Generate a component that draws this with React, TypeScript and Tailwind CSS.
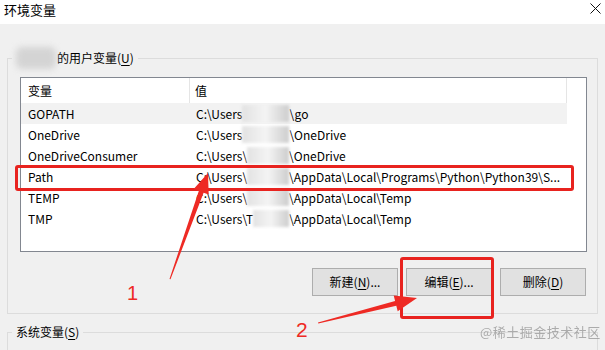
const rows = [
  { name: "GOPATH", pre: "C:\\Users", post: "\\go", hover: true },
  { name: "OneDrive", pre: "C:\\Users", post: "\\OneDrive" },
  { name: "OneDriveConsumer", pre: "C:\\Users\\", post: "\\OneDrive" },
  { name: "Path", pre: "C:\\Users\\", post: "\\AppData\\Local\\Programs\\Python\\Python39\\S..." },
  { name: "TEMP", pre: "C:\\Users\\", post: "\\AppData\\Local\\Temp" },
  { name: "TMP", pre: "C:\\Users\\T", post: "\\AppData\\Local\\Temp" },
];

function Blur({ w }: { w: number }) {
  return (
    <span
      className="inline-block h-[17px] align-middle bg-gradient-to-r from-[#e2e2e2] via-[#f4f4f4] to-[#cdcdcd] blur-[1.5px]"
      style={{ width: w }}
    />
  );
}

function Btn({ label, u, tail }: { label: string; u: string; tail: string }) {
  return (
    <button className="w-[86px] h-[28px] bg-[#e1e1e1] border border-[#adadad] text-[12px] text-black">
      {label}(<span className="underline underline-offset-2">{u}</span>){tail}
    </button>
  );
}

export default function App() {
  return (
    <div
      className="relative w-[605px] h-[350px] overflow-hidden bg-[#f0f0f0] text-black"
      style={{ fontFamily: '"Noto Sans CJK SC", "Noto Sans", sans-serif' }}
    >
      {/* title bar */}
      <div className="h-[24px] bg-white flex items-center justify-between pl-[4px] pr-[4px]">
        <span className="text-[13px] leading-none -mt-[6px]">环境变量</span>
        <svg width="11" height="11" viewBox="0 0 11 11" className="-mt-[8px]">
          <path d="M0.5 0.5 L10.5 10.5 M10.5 0.5 L0.5 10.5" stroke="#111" strokeWidth="1" />
        </svg>
      </div>

      {/* user variables */}
      <fieldset className="mx-[7px] mt-[24px] border border-[#dcdcdc] pl-[12px] pr-[10px] pt-[9px] pb-[17px]">
        <legend className="-ml-[8px] px-[4px] h-[20px] text-[12px] leading-[20px] flex items-center">
          <span className="inline-block w-[40px] h-[22px] -my-[1px] bg-[#d4d4d4] blur-[3px] rounded-[6px] mr-[1px]" />
          的用户变量(<span className="underline underline-offset-2">U</span>)
        </legend>
        <div className="h-[175px] bg-white border border-[#828790] text-[12px]">
          <div className="flex h-[25px] w-[546px] border-r border-[#e5e5e5]">
            <div className="w-[169px] pl-[7px] flex items-center border-r border-[#e5e5e5]">变量</div>
            <div className="flex-1 pl-[5px] flex items-center">值</div>
          </div>
          {rows.map((r) => (
            <div
              key={r.name}
              className={`flex h-[21px] w-[546px] items-center ${r.hover ? "bg-[#f2f2f2]" : ""}`}
            >
              <div className="w-[170px] pl-[7px]">{r.name}</div>
              <div className="flex-1 pl-[5px] whitespace-nowrap flex items-center">
                <span>{r.pre}</span>
                <Blur w={r.pre.endsWith("Users") ? 47 : r.pre.endsWith("T") ? 36 : 42} />
                <span>{r.post}</span>
              </div>
            </div>
          ))}
        </div>
        <div className="flex justify-end gap-[8px] mt-[16px] pr-[1px]">
          <Btn label="新建" u="N" tail="..." />
          <Btn label="编辑" u="E" tail="..." />
          <Btn label="删除" u="D" tail="" />
        </div>
      </fieldset>

      {/* system variables */}
      <fieldset className="mx-[7px] mt-[8px] border border-[#dcdcdc] h-[60px]">
        <legend className="ml-[4px] px-[4px] text-[12px] leading-[20px]">
          系统变量(<span className="underline underline-offset-2">S</span>)
        </legend>
      </fieldset>

      {/* watermark */}
      <div className="absolute left-[480px] top-[322px] text-[13px] text-[#9a9a9a] opacity-80 tracking-[0.5px]">
        @稀土掘金技术社区
      </div>

      {/* annotations */}
      <div className="absolute left-[15px] top-[165px] w-[559px] h-[26px] border-[3px] border-[#e8231f] rounded-[3px]" />
      <div className="absolute left-[400px] top-[257px] w-[94px] h-[62px] border-[3px] border-[#e8231f] rounded-[3px]" />
      <svg className="absolute left-0 top-0" width="605" height="350">
        <polygon
          points="169.5,279 198.8,190.9 193.7,189.1 208,173 208.7,194.5 203.6,192.7 170.5,279.3"
          fill="#ee2a24"
        />
        <polygon
          points="318,322.5 395.1,301 393.7,295.6 417,298 397.7,311.2 396.3,305.8 318.3,323.6"
          fill="#ee2a24"
        />
      </svg>
      <div
        className="absolute left-[127px] top-[283px] text-[20px] leading-none text-[#ee2a24]"
        style={{ fontFamily: '"Liberation Sans", sans-serif' }}
      >
        1
      </div>
      <div
        className="absolute left-[296px] top-[319px] text-[21px] leading-none text-[#ee2a24]"
        style={{ fontFamily: '"Liberation Sans", sans-serif' }}
      >
        2
      </div>
    </div>
  );
}
